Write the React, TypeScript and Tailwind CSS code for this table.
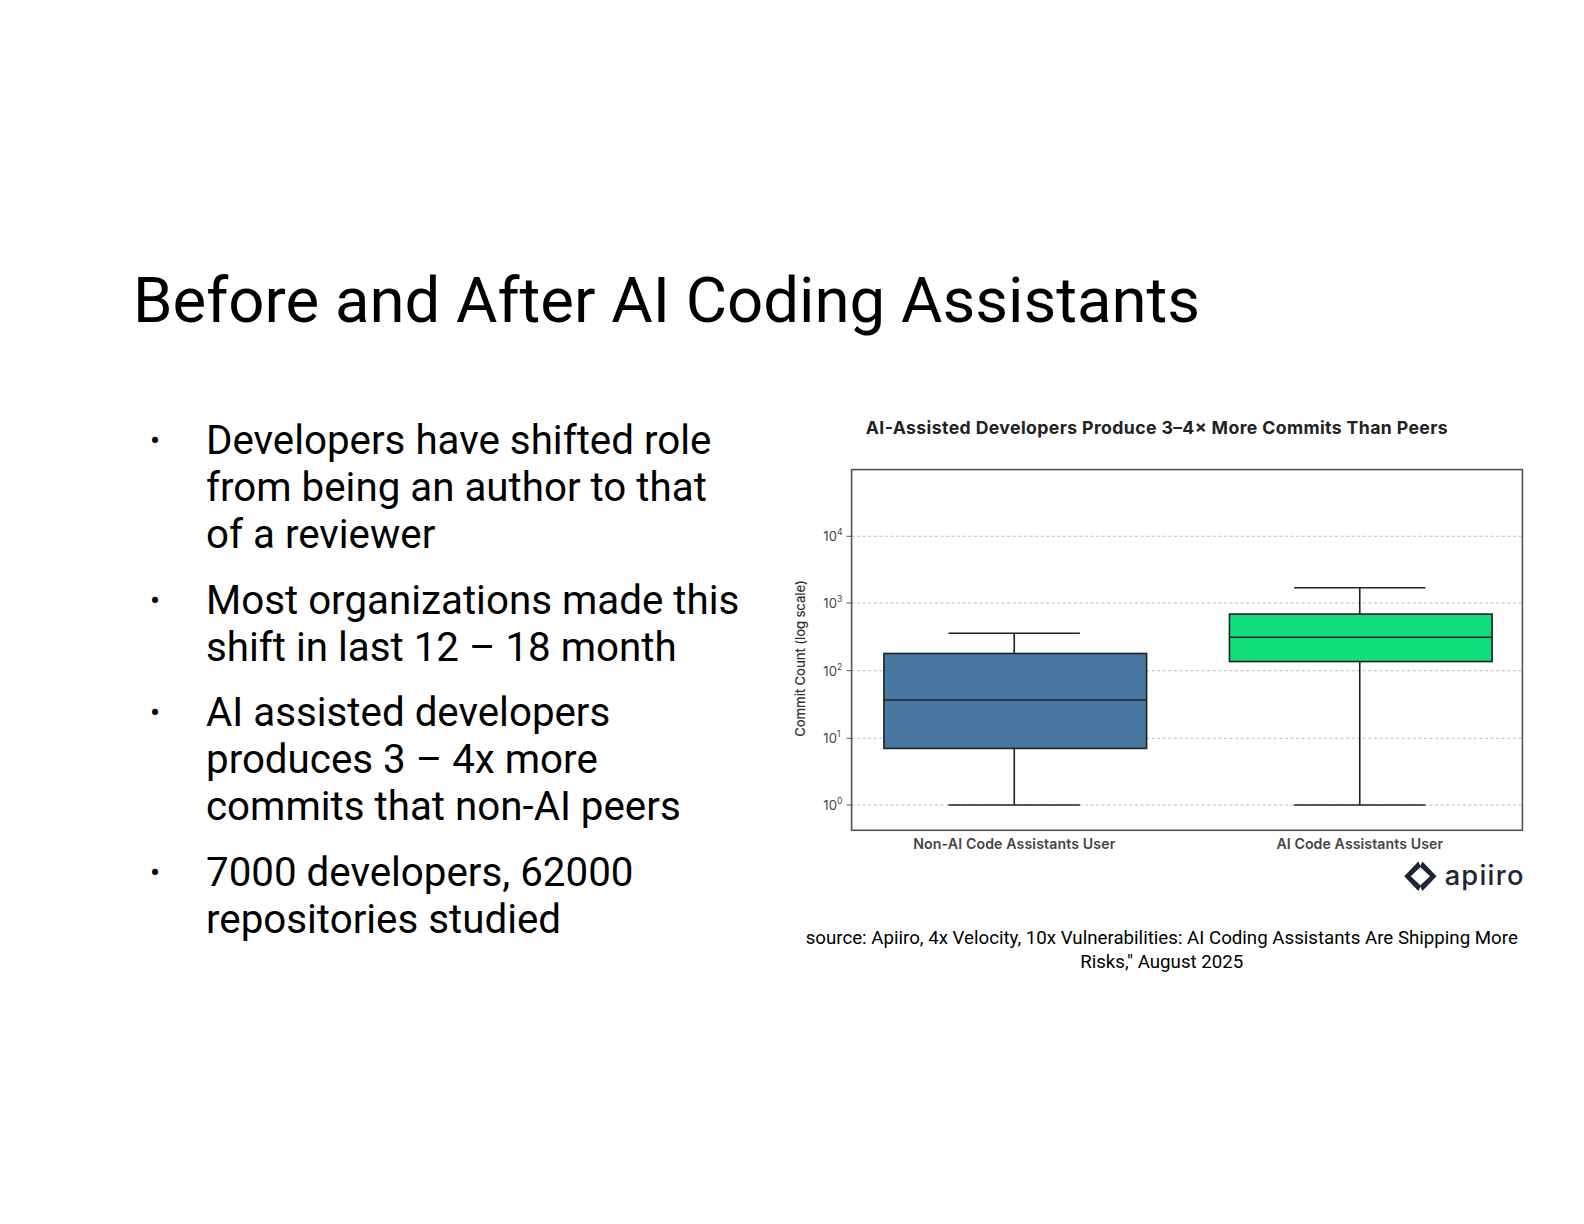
import React from "react";

const BULLETS = [
  ["Developers have shifted role", "from being an author to that", "of a reviewer"],
  ["Most organizations made this", "shift in last 12 – 18 month"],
  ["AI assisted developers", "produces 3 – 4x more", "commits that non-AI peers"],
  ["7000 developers, 62000", "repositories studied"],
];

const GRID = [
  { y: 121, exp: "4" },
  { y: 187, exp: "3" },
  { y: 254, exp: "2" },
  { y: 321, exp: "1" },
  { y: 387, exp: "0" },
];

// box plot drawn in svg coords (origin = top-left of the chart figure)
function BoxPlot({ cx, x0, x1, q1, q3, med, top, bottom, capW, fill }: any) {
  return (
    <g stroke="#222" strokeWidth={1.6}>
      <line x1={cx} x2={cx} y1={top} y2={q3} />
      <line x1={cx} x2={cx} y1={q1} y2={bottom} />
      <line x1={cx - capW / 2} x2={cx + capW / 2} y1={top} y2={top} />
      <line x1={cx - capW / 2} x2={cx + capW / 2} y1={bottom} y2={bottom} />
      <rect x={x0} y={q3} width={x1 - x0} height={q1 - q3} fill={fill} />
      <line x1={x0} x2={x1} y1={med} y2={med} />
    </g>
  );
}

function Chart() {
  const font = "Inter, 'Noto Sans', sans-serif";
  return (
    <svg width="737.5" height="485" viewBox="0 0 730 480" className="block shrink-0">
      <text x="360" y="20" textAnchor="middle" fontFamily={font} fontWeight={700} fontSize="17.5" fill="#222" textLength="576">
        AI-Assisted Developers Produce 3–4× More Commits Than Peers
      </text>

      {/* grid */}
      {GRID.map((g) => (
        <g key={g.exp}>
          <line x1="58" x2="722" y1={g.y} y2={g.y} stroke="#bdbdbd" strokeWidth="1" strokeDasharray="3 2.5" />
          <line x1="53" x2="58" y1={g.y} y2={g.y} stroke="#555" strokeWidth="1" />
          <text x="30" y={g.y + 5} fontFamily={font} fontSize="13" fill="#444">
            10
            <tspan dy="-6" fontSize="8.5">{g.exp}</tspan>
          </text>
        </g>
      ))}

      <text
        transform="translate(12 242) rotate(-90)"
        textAnchor="middle"
        fontFamily={font}
        fontSize="13"
        fill="#333"
        fontWeight={500}
        textLength="155"
      >
        Commit Count (log scale)
      </text>

      <BoxPlot cx={219} x0={90} x1={350} q1={331} q3={237} med={283} top={217} bottom={387} capW={130} fill="#4878a2" />
      <BoxPlot cx={561} x0={432} x1={692} q1={245} q3={198} med={221} top={172} bottom={387} capW={130} fill="#12dd7c" />

      <rect x="58" y="55" width="664" height="357" fill="none" stroke="#555" strokeWidth="1.6" />

      <text x="219" y="431" textAnchor="middle" fontFamily={font} fontWeight={600} fontSize="14" fill="#444" textLength="200">
        Non-AI Code Assistants User
      </text>
      <text x="561" y="431" textAnchor="middle" fontFamily={font} fontWeight={600} fontSize="14" fill="#444" textLength="165">
        AI Code Assistants User
      </text>

      {/* apiiro logo */}
      <g fill="#1e2537">
        <path d="M619 443 L605 457.5 L619 472 L621.5 467 L611.5 457.5 L621.5 448 Z" />
        <path d="M623 443 L637 457.5 L623 472 L620.5 467 L630.5 457.5 L620.5 448 Z" />
      </g>
      <text x="645" y="466" fontFamily={font} fontWeight={500} fontSize="27" fill="#1e2537" textLength="78">
        apiiro
      </text>
    </svg>
  );
}

export default function App() {
  return (
    <div className="w-[1584px] h-[1224px] bg-white text-black" style={{ fontFamily: "Roboto, 'Liberation Sans', sans-serif" }}>
      <h1 className="pt-[265px] pl-[133px] text-[63.5px] leading-[72px] font-normal">
        Before and After AI Coding Assistants
      </h1>

      <div className="flex mt-[66px]">
        <ul className="pl-[142px] w-[785px] shrink-0 flex flex-col gap-[18.5px] pt-[14px]">
          {BULLETS.map((lines, i) => (
            <li key={i} className="flex text-[40.3px] leading-[47px]">
              <span className="w-[64px] shrink-0 text-[30px] pl-[8px]">•</span>
              <span>
                {lines.map((l, j) => (
                  <span key={j} className="block">{l}</span>
                ))}
              </span>
            </li>
          ))}
        </ul>

        <div className="flex flex-col w-[737.5px] shrink-0 ml-[8px] pt-[11px]">
          <Chart />
          <p className="mt-[27px] text-center text-[18.7px] leading-[24px] text-black">
            source: Apiiro, 4x Velocity, 10x Vulnerabilities: AI Coding Assistants Are Shipping More
            <br />
            Risks," August 2025
          </p>
        </div>
      </div>
    </div>
  );
}
